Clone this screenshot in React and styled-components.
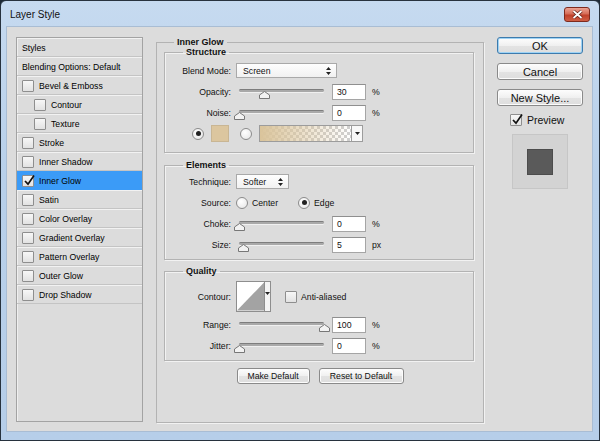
import React from 'react'
import styled, { createGlobalStyle } from 'styled-components'

const GlobalStyle = createGlobalStyle`
  html, body { margin: 0; padding: 0; background: #1e2a36; }
  body { font-family: "Liberation Sans", Arial, sans-serif; }
  * { box-sizing: border-box; }
`

const Window = styled.div`
  width: 600px;
  height: 441px;
  border: 1px solid #27323e;
  border-radius: 6px 6px 0 0;
  background: linear-gradient(#c6daf0, #b8d0ea 40%, #b6cee9);
  display: flex;
  flex-direction: column;
  overflow: hidden;
`

const TitleBar = styled.div`
  height: 25px;
  display: flex;
  align-items: center;
  padding: 0 8px 0 9px;
  font-size: 10px;
  color: #111;
`

const Title = styled.div`
  flex: 1;
  padding-top: 1px;
`

const CloseButton = styled.div`
  width: 26px;
  height: 15px;
  margin-top: 1px;
  margin-right: 1px;
  border: 1px solid #7e2a1e;
  border-radius: 3px;
  background: linear-gradient(#eba394, #d66d58 45%, #c0412b 55%, #cf5e45);
  display: flex;
  align-items: center;
  justify-content: center;
`

const Client = styled.div`
  flex: 1;
  margin: 0 6px 8px 5px;
  background: #dcdcdc;
  border: 1px solid #a9bdd4;
  display: flex;
  padding: 10px 0 0 9px;
`

/* ---------- left list ---------- */

const StylePanel = styled.div`
  width: 127px;
  height: 385px;
  border: 1px solid #a3a3a3;
  box-shadow: inset 1px 1px 0 #efefef;
  background: #dcdcdc;
  display: flex;
  flex-direction: column;
`

const StyleRow = styled.div`
  height: 19px;
  flex: none;
  display: flex;
  align-items: center;
  padding-left: ${p => (p.$indent ? 17 : 5)}px;
  border-top: 1px solid ${p => (p.$active ? '#3b9bf7' : '#f2f2f2')};
  border-bottom: 1px solid ${p => (p.$active ? '#3b9bf7' : '#c4c4c4')};
  background: ${p => (p.$active ? '#3b9bf7' : 'transparent')};
  font-size: 8.7px;
  color: #000;
  gap: 5px;
`

const Box = styled.span`
  width: 12px;
  height: 12px;
  flex: none;
  border: 1px solid #8e8e8e;
  border-radius: 1px;
  background: linear-gradient(#f7f7f7, #e2e2e2);
  display: inline-flex;
  align-items: center;
  justify-content: center;
  position: relative;
`

const CheckMark = styled.svg`
  position: absolute;
  left: 0;
  top: -2px;
`

const Check = ({ on }) => (
  <Box>
    {on && (
      <CheckMark width="13" height="13" viewBox="0 0 13 13">
        <path d="M2 7 L5 10.2 L11 1.5" fill="none" stroke="#111" strokeWidth="1.7" />
      </CheckMark>
    )}
  </Box>
)

/* ---------- middle ---------- */

const Middle = styled.fieldset`
  margin: 0 0 0 13px;
  width: 328px;
  height: 386px;
  padding: 0 9px 0 7px;
  border: 1px solid #b3b3b3;
  box-shadow: 1px 1px 0 #f2f2f2;
  min-width: 0;
`

const Legend = styled.legend`
  font-size: 9px;
  font-weight: bold;
  line-height: 10px;
  padding: 0 3px;
  margin-left: ${p => p.$offset || 18}px;
  color: #111;
`

const Group = styled.fieldset`
  margin: ${p => p.$top || 0}px 0 0 0;
  padding: ${p => p.$pt || 0}px 0 ${p => p.$pb || 0}px 0;
  border: 1px solid #b3b3b3;
  box-shadow: 1px 1px 0 #f2f2f2, inset 1px 1px 0 #f2f2f2;
  min-width: 0;
`

const Row = styled.div`
  height: ${p => p.$h || 21}px;
  display: flex;
  align-items: center;
  font-size: 8.7px;
  color: #111;
  padding-left: ${p => p.$pad || 0}px;
  margin-top: ${p => p.$mt || 0}px;
`

const Label = styled.span`
  width: 66px;
  text-align: right;
  margin-right: 5px;
  flex: none;
`

const Select = styled.div`
  width: ${p => p.$w}px;
  height: 15px;
  border: 1px solid #a9a9a9;
  background: linear-gradient(#fefefe, #f1f1f1);
  display: flex;
  align-items: center;
  justify-content: space-between;
  padding: 0 5px 0 6px;
  font-size: 8.7px;
`

const Arrows = () => (
  <svg width="5" height="8" viewBox="0 0 5 8">
    <path d="M2.5 0 L5 3 H0 Z M2.5 8 L5 5 H0 Z" fill="#222" />
  </svg>
)

const SliderWrap = styled.div`
  width: 92px;
  height: 16px;
  position: relative;
  flex: none;
`

const Track = styled.div`
  position: absolute;
  left: 3px;
  top: 5px;
  width: 85px;
  height: 3px;
  border-radius: 2px;
  background: #a9a9a9;
  border-top: 1px solid #7d7d7d;
  box-shadow: 0 1px 0 #f0f0f0;
`

const Thumb = styled.svg`
  position: absolute;
  top: 7px;
`

// thumb left is computed from the value
const Slider = ({ value }) => (
  <SliderWrap>
    <Track />
    <Thumb width="11" height="8" viewBox="0 0 11 8" style={{ left: 3 + (value * 85) / 100 - 5.5 }}>
      <path d="M5.5 0.5 L10.5 4 V7.5 H0.5 V4 Z" fill="#f2f2f2" stroke="#777" />
    </Thumb>
  </SliderWrap>
)

const Input = styled.div`
  width: 34px;
  height: 16px;
  margin-left: 4px;
  border: 1px solid #a5a5a5;
  border-top-color: #8f8f8f;
  background: #fff;
  padding-left: 4px;
  display: flex;
  align-items: center;
  font-size: 8.7px;
`

const Unit = styled.span`
  margin-left: 6px;
  font-size: 8.7px;
`

const Radio = styled.span`
  width: 12px;
  height: 12px;
  flex: none;
  border-radius: 50%;
  border: 1px solid #8b8b8b;
  background: radial-gradient(circle at 40% 35%, #ffffff, #e4e4e4);
  display: inline-flex;
  align-items: center;
  justify-content: center;
  margin-right: ${p => p.$mr || 4}px;
  &::after {
    content: '';
    width: 5px;
    height: 5px;
    border-radius: 50%;
    background: ${p => (p.$on ? '#222' : 'transparent')};
  }
`

const Swatch = styled.span`
  width: 18px;
  height: 17px;
  margin-right: 11px;
  border: 1px solid #c9b694;
  background: #dcc69f;
`

const GradientBox = styled.div`
  width: 104px;
  height: 17px;
  display: flex;
  border: 1px solid #9c9c9c;
`

const GradientFill = styled.div`
  flex: 1;
  background:
    linear-gradient(to right, rgba(218, 196, 155, 1), rgba(218, 196, 155, 0)),
    repeating-conic-gradient(#cfcfcf 0 25%, #ffffff 0 50%) 0 0 / 6px 6px;
`

const DropStrip = styled.div`
  width: 11px;
  border-left: 1px solid #9c9c9c;
  background: #f8f8f8;
  display: flex;
  align-items: center;
  justify-content: center;
`

const SourceOption = styled.span`
  display: inline-flex;
  align-items: center;
  width: ${p => (p.$w ? `${p.$w}px` : 'auto')};
`

const ContourBox = styled.div`
  width: 35px;
  height: 31px;
  border: 1px solid #8e8e8e;
  display: flex;
  background: #fff;
`

const ContourStrip = styled.div`
  width: 6px;
  border-left: 1px solid #8e8e8e;
  background: #f4f4f4;
  display: flex;
  justify-content: center;
  padding-top: 10px;
`

const AntiAlias = styled.span`
  display: inline-flex;
  align-items: center;
  gap: 4px;
  margin-left: 14px;
`

const ButtonRow = styled.div`
  display: flex;
  justify-content: center;
  gap: 9px;
  margin-top: 7px;
  padding-left: 2px;
`

const Button = styled.div`
  width: ${p => p.$w}px;
  height: ${p => p.$h || 16}px;
  border: 1px solid ${p => (p.$primary ? '#3d7bad' : '#8a8a8a')};
  border-radius: 3px;
  background: linear-gradient(#fdfdfd, #f0f0f0 50%, #e3e3e3 51%, #dedede);
  box-shadow: ${p => (p.$primary ? 'inset 0 0 0 1px #9ed3f5' : 'inset 0 0 0 1px #fcfcfc')};
  display: flex;
  align-items: center;
  justify-content: center;
  font-size: ${p => p.$fs || 8.7}px;
  color: #111;
`

/* ---------- right column ---------- */

const RightCol = styled.div`
  width: 86px;
  margin-left: 13px;
  display: flex;
  flex-direction: column;
  gap: 9px;
`

const PreviewRow = styled.div`
  display: flex;
  align-items: center;
  gap: 5px;
  padding-left: 13px;
  font-size: 10.5px;
  color: #111;
  margin-top: -1px;
`

const PreviewBox = styled.div`
  width: 56px;
  height: 55px;
  margin-left: 15px;
  margin-top: -1px;
  border: 1px solid #c6c6c6;
  background: #d3d3d3;
  display: flex;
  align-items: center;
  justify-content: center;
`

const PreviewSquare = styled.div`
  width: 26px;
  height: 26px;
  background: #5a5a5a;
  border: 1px solid #4c4c4c;
`

const styles = [
  { name: 'Blending Options: Default', box: false },
  { name: 'Bevel & Emboss' },
  { name: 'Contour', indent: true },
  { name: 'Texture', indent: true },
  { name: 'Stroke' },
  { name: 'Inner Shadow' },
  { name: 'Inner Glow', on: true },
  { name: 'Satin' },
  { name: 'Color Overlay' },
  { name: 'Gradient Overlay' },
  { name: 'Pattern Overlay' },
  { name: 'Outer Glow' },
  { name: 'Drop Shadow' },
]

const SliderRow = ({ label, value, unit = '%', mt }) => (
  <Row $mt={mt}>
    <Label>{label}</Label>
    <Slider value={value} />
    <Input>{value}</Input>
    <Unit>{unit}</Unit>
  </Row>
)

const App = () => (
  <>
    <GlobalStyle />
    <Window>
      <TitleBar>
        <Title>Layer Style</Title>
        <CloseButton>
          <svg width="11" height="9" viewBox="0 0 11 9">
            <path d="M1.5 1 L9.5 8 M9.5 1 L1.5 8" stroke="#5a1a12" strokeWidth="3.2" />
            <path d="M1.5 1 L9.5 8 M9.5 1 L1.5 8" stroke="#fff" strokeWidth="1.8" />
          </svg>
        </CloseButton>
      </TitleBar>
      <Client>
        <StylePanel>
          <StyleRow>Styles</StyleRow>
          {styles.map(s => (
            <StyleRow key={s.name} $indent={s.indent} $active={s.on}>
              {s.box !== false && <Check on={s.on} />}
              {s.name}
            </StyleRow>
          ))}
        </StylePanel>

        <Middle>
          <Legend $offset={10}>Inner Glow</Legend>
          <Group $pt={3} $pb={8}>
            <Legend>Structure</Legend>
            <Row>
              <Label>Blend Mode:</Label>
              <Select $w={101}>
                Screen
                <Arrows />
              </Select>
            </Row>
            <SliderRow label="Opacity:" value={30} />
            <SliderRow label="Noise:" value={0} />
            <Row $pad={27}>
              <Radio $on $mr={7} />
              <Swatch />
              <Radio $mr={7} />
              <GradientBox>
                <GradientFill />
                <DropStrip>
                  <svg width="5" height="3" viewBox="0 0 5 3">
                    <path d="M0 0 H5 L2.5 3 Z" fill="#222" />
                  </svg>
                </DropStrip>
              </GradientBox>
            </Row>
          </Group>

          <Group $top={7} $pt={1} $pb={4}>
            <Legend>Elements</Legend>
            <Row>
              <Label>Technique:</Label>
              <Select $w={53}>
                Softer
                <Arrows />
              </Select>
            </Row>
            <Row>
              <Label>Source:</Label>
              <SourceOption $w={62}>
                <Radio />
                Center
              </SourceOption>
              <SourceOption>
                <Radio $on />
                Edge
              </SourceOption>
            </Row>
            <SliderRow label="Choke:" value={0} />
            <SliderRow label="Size:" value={5} unit="px" />
          </Group>

          <Group $top={6} $pt={5} $pb={4}>
            <Legend>Quality</Legend>
            <Row $h={31}>
              <Label>Contour:</Label>
              <ContourBox>
                <svg width="28" height="29" viewBox="0 0 28 29">
                  <path d="M0 29 L28 0 V29 Z" fill="#a3a3a3" />
                </svg>
                <ContourStrip>
                  <svg width="5" height="3" viewBox="0 0 5 3">
                    <path d="M0 0 H5 L2.5 3 Z" fill="#222" />
                  </svg>
                </ContourStrip>
              </ContourBox>
              <AntiAlias>
                <Check />
                Anti-aliased
              </AntiAlias>
            </Row>
            <SliderRow label="Range:" value={100} mt={2} />
            <SliderRow label="Jitter:" value={0} />
          </Group>

          <ButtonRow>
            <Button $w={73}>Make Default</Button>
            <Button $w={85}>Reset to Default</Button>
          </ButtonRow>
        </Middle>

        <RightCol>
          <Button $w={86} $h={17} $fs={11} $primary>OK</Button>
          <Button $w={86} $h={17} $fs={11}>Cancel</Button>
          <Button $w={86} $h={17} $fs={11}>New Style...</Button>
          <PreviewRow>
            <Check on />
            Preview
          </PreviewRow>
          <PreviewBox>
            <PreviewSquare />
          </PreviewBox>
        </RightCol>
      </Client>
    </Window>
  </>
)

export default App
